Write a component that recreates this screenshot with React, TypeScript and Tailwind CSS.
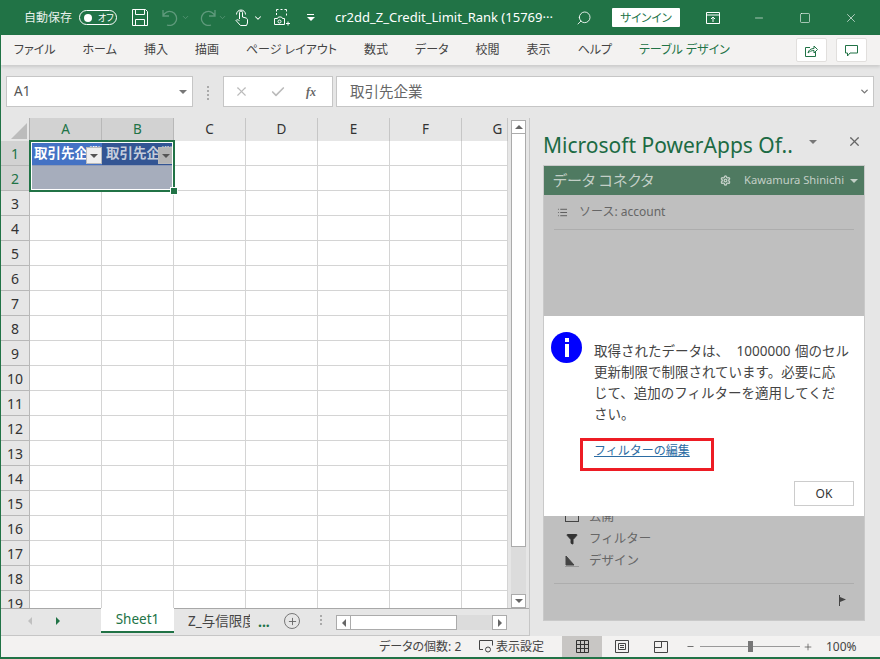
import { ChevronDown, Search, Minus, Square, X, Check, Plus, Settings, List, Filter } from 'lucide-react';

const font = { fontFamily: '"Noto Sans", "Noto Sans CJK JP", sans-serif' };
const cols = ['A', 'B', 'C', 'D', 'E', 'F', 'G'];
const rows = Array.from({ length: 19 }, (_, i) => i + 1);
const tabs = ['ファイル', 'ホーム', '挿入', '描画', 'ページ レイアウト', '数式', 'データ', '校閲', '表示', 'ヘルプ'];

function Caret({ className }: { className: string }) {
    return <span className={`w-0 h-0 border-x-[4px] border-x-transparent border-t-[4px] ${className}`} />;
}

function TitleBar() {
    return (
        <div className="h-[35px] shrink-0 bg-[#217346] text-white flex items-center text-[12px] pl-[23px] [font-feature-settings:'palt']">
            <span className="w-[55px] text-[#e8f0eb]">自動保存</span>
            <div className="w-[38px] h-[15px] rounded-full border border-white flex items-center pl-[4px] gap-[6px]">
                <span className="w-[8px] h-[8px] rounded-full bg-white" />
                <span className="text-[9px] leading-none">オフ</span>
            </div>
            <svg width="16" height="17" viewBox="0 0 16 17" fill="none" stroke="white" className="ml-[15px]">
                <path d="M.5.5h13l2 2v14H.5z M3.5.5v5h9v-5 M3.5 16.5v-6h9v6" />
            </svg>
            <svg width="16" height="17" viewBox="0 0 16 17" fill="none" stroke="#5f9a7c" strokeWidth="1.300" className="ml-[14px]">
                <path d="M1 1v6h6 M1 7a7 7 0 1 1 4 9" />
            </svg>
            <ChevronDown size={9} className="ml-[3px] text-[#5f9a7c]" />
            <svg width="16" height="17" viewBox="0 0 16 17" fill="none" stroke="#5f9a7c" strokeWidth="1.300" className="ml-[10px]">
                <path d="M15 1v6H9 M15 7a7 7 0 1 0-4 9" />
            </svg>
            <ChevronDown size={9} className="ml-[2px] text-[#5f9a7c]" />
            <svg width="13" height="17" viewBox="0 0 13 17" fill="none" stroke="white" className="ml-[8px]">
                <path d="M4.500 10V3.500a1.500 1.500 0 0 1 3 0V8l3.500 1c1 .4 1.500 1 1.500 2v3l-1 2.500H5.500L1 11.500c.5-1 1.700-1 3.500.2 M1.500 5.500a4.500 4.500 0 0 1 9 0" />
            </svg>
            <ChevronDown size={10} strokeWidth={2.500} className="ml-[5px]" />
            <svg width="16" height="17" viewBox="0 0 16 17" fill="none" stroke="white" className="ml-[11px]">
                <path d="M2.500 6V4 M2.500 2.500V.5h2 M6.500.5h2 M10.500.5h2v2 M12.500 4.500v2" />
                <path d="M.5 9.500h3l1-1.500h3l1 1.500h2v6h-10z" />
                <circle cx="5.500" cy="12.500" r="1.500" />
                <path d="M12 14.500h4 M14 12.500v4" />
            </svg>
            <div className="ml-[16px] w-[9px] flex flex-col items-center gap-[2px]">
                <span className="w-[7px] h-px bg-white" />
                <Caret className="border-t-white" />
            </div>
            <span className="ml-[20px] w-[241px] text-[13px] whitespace-nowrap [font-feature-settings:normal]">cr2dd_Z_Credit_Limit_Rank (15769···</span>
            <Search size={16} strokeWidth={1.300} className="-scale-x-100" />
            <div className="ml-[20px] w-[68px] h-[19px] bg-white text-[#217346] text-[11.500px] flex items-center justify-center rounded-[1px]">サインイン</div>
            <svg width="14" height="12" viewBox="0 0 14 12" fill="none" stroke="white" className="ml-[26px]">
                <path d="M.5.500h13v11H.5z M.5 3h13 M7 10V5 M5 7l2-2 2 2" />
            </svg>
            <Minus size={12} strokeWidth={1.200} className="ml-[33px]" />
            <Square size={12} strokeWidth={1.200} className="ml-[34px]" />
            <X size={14} strokeWidth={1.100} className="ml-[33px]" />
        </div>
    );
}

function RibbonTabs() {
    return (
        <div className="h-[30px] shrink-0 bg-[#f3f2f1] flex items-center pl-[13px] text-[12px] text-[#444] shadow-[0_2px_3px_rgba(0,0,0,0.12)] relative [font-feature-settings:'palt']">
            <div className="flex items-center gap-[27px] whitespace-nowrap">
                {tabs.map((t) => <span key={t}>{t}</span>)}
                <span className="text-[#217346]">テーブル デザイン</span>
            </div>
            <div className="ml-auto mr-[13px] flex gap-[9px]">
                <div className="w-[31px] h-[24px] bg-white border border-[#e1dfdd] rounded-[2px] flex items-center justify-center">
                    <svg width="13" height="13" viewBox="0 0 13 13" fill="none" stroke="#217346">
                        <path d="M5 3.500H.5v9h10V8 M3 9c.5-3 3-4.500 6-4.500V2l3.500 3.500L9 9V6.500C6.500 6.500 4.500 7.500 3 9z" />
                    </svg>
                </div>
                <div className="w-[31px] h-[24px] bg-white border border-[#e1dfdd] rounded-[2px] flex items-center justify-center">
                    <svg width="13" height="13" viewBox="0 0 13 13" fill="none" stroke="#217346">
                        <path d="M.5 1.500h12v7.500H5l-2.500 3V9h-2z" />
                    </svg>
                </div>
            </div>
        </div>
    );
}

function FormulaBar() {
    return (
        <div className="h-[53px] shrink-0 bg-[#e6e6e6] flex items-start pt-[11px] pl-[5px] pr-[6px]">
            <div className="w-[187px] h-[31px] bg-white border border-[#c6c6c6] flex items-center justify-between pl-[7px] pr-[5px] text-[#555] text-[13.500px]">
                <span>A1</span>
                <Caret className="border-t-[#777]" />
            </div>
            <div className="w-[30px] flex flex-col items-center gap-[2px] pt-[10px]">
                <span className="w-[2px] h-[2px] bg-[#aaa]" />
                <span className="w-[2px] h-[2px] bg-[#aaa]" />
                <span className="w-[2px] h-[2px] bg-[#aaa]" />
                <span className="w-[2px] h-[2px] bg-[#aaa]" />
            </div>
            <div className="w-[110px] h-[31px] bg-white border border-[#c6c6c6] flex items-center pl-[10px] text-[#bbb]">
                <X size={15} strokeWidth={1.800} />
                <Check size={16} strokeWidth={2.500} className="ml-[21px]" />
                <span className="ml-[20px] text-[#666] text-[12px] italic font-bold" style={{ fontFamily: '"Liberation Serif", serif' }}>fx</span>
            </div>
            <div className="ml-[3px] flex-1 h-[31px] bg-white border border-[#c6c6c6] flex items-center justify-between pl-[13px] pr-[3px] text-[#666] text-[14.500px]">
                <span>取引先企業</span>
                <ChevronDown size={11} strokeWidth={3} className="text-[#777]" />
            </div>
        </div>
    );
}

function FilterButton({ dark }: { dark?: boolean }) {
    return (
        <div className={`absolute right-0 top-[6px] w-[16px] h-[17px] border border-[#bbb] flex items-center justify-center ${dark ? 'bg-[#b4b4b4]' : 'bg-[#efefef]'}`}>
            <Caret className="border-t-[#555]" />
        </div>
    );
}

function Cell({ row, col }: { row: number; col: string }) {
    if (row === 1 && (col === 'A' || col === 'B')) {
        const dark = col === 'B';
        return (
            <div className={`w-[72px] h-[25px] shrink-0 relative overflow-hidden border-b border-[#8e9ab5] flex items-center pl-[4px] font-bold text-[13.500px] whitespace-nowrap ${dark ? 'bg-[#335593] text-[#c5cddc]' : 'bg-[#4472c4] text-white'}`}>
                取引先企業
                <FilterButton dark={dark} />
            </div>
        );
    }
    if (row === 2 && (col === 'A' || col === 'B')) {
        return <div className="w-[72px] h-[25px] shrink-0 bg-[#a6adbc]" />;
    }
    return <div className={`h-[25px] shrink-0 border-r border-b border-[#d4d4d4] bg-white ${col === 'G' ? 'w-[46px]' : 'w-[72px]'}`} />;
}

function Sheet() {
    return (
        <div className="flex-1 relative overflow-hidden">
            <div className="flex h-[23px]">
                <div className="w-[29px] shrink-0 bg-[#e6e6e6] border-r border-[#b0b0b0] flex items-end justify-end p-[2px]">
                    <span className="w-0 h-0 border-l-[16px] border-l-transparent border-b-[16px] border-b-[#bcbcbc]" />
                </div>
                {cols.map((c) => (
                    <div key={c} className={`shrink-0 flex items-center justify-center text-[13.500px] border-r ${c === 'A' || c === 'B' ? 'bg-[#d2d2d2] text-[#217346] border-[#b8b8b8]' : 'bg-[#e6e6e6] text-[#333] border-[#c6c6c6]'} ${c === 'G' ? 'w-[46px] pl-[26px]' : 'w-[72px]'}`}>{c}</div>
                ))}
            </div>
            {rows.map((r) => (
                <div key={r} className="flex">
                    <div className={`w-[29px] h-[25px] shrink-0 flex items-center justify-center text-[14px] border-r border-b border-[#b8b8b8] ${r < 3 ? 'bg-[#d2d2d2] text-[#217346]' : 'bg-[#e6e6e6] text-[#333]'}`}>{r}</div>
                    {cols.map((c) => <Cell key={c} row={r} col={c} />)}
                </div>
            ))}
            {/* selection frame */}
            <div className="absolute left-[28px] top-[22px] w-[146px] h-[52px] border-2 border-[#217346] shadow-[inset_0_0_0_1px_white] pointer-events-none" />
            <div className="absolute left-[170px] top-[70px] w-[6px] h-[6px] bg-[#217346] outline outline-white" />
        </div>
    );
}

function VScroll() {
    return (
        <div className="w-[15px] mx-[3px] flex flex-col pt-[2px] bg-[#e6e6e6]">
            <div className="h-[14px] bg-white border border-[#ababab] flex items-center justify-center">
                <span className="w-0 h-0 border-x-[4px] border-x-transparent border-b-[4px] border-b-[#666]" />
            </div>
            <div className="h-[413px] bg-white border-x border-b border-[#ababab]" />
            <div className="flex-1 bg-[#dcdcdc]" />
            <div className="h-[14px] bg-white border border-[#ababab] flex items-center justify-center">
                <Caret className="border-t-[#666]" />
            </div>
        </div>
    );
}

function TabsBar() {
    return (
        <div className="h-[28px] shrink-0 flex items-start bg-[#e6e6e6] border-b border-[#c6c6c6] text-[14px] border-t border-t-[#a8a8a8]">
            <div className="w-[100px] h-[24px] flex items-center pl-[27px] gap-[24px]">
                <span className="w-0 h-0 border-y-[4px] border-y-transparent border-r-[4px] border-r-[#c0c0c0]" />
                <span className="w-0 h-0 border-y-[4px] border-y-transparent border-l-[4px] border-l-[#217346]" />
            </div>
            <div className="w-[73px] h-[25px] -mt-px bg-white border-b-2 border-[#217346] text-[#217346] flex items-center justify-center text-[13.500px]">Sheet1</div>
            <div className="ml-[14px] w-[62px] h-[24px] overflow-hidden whitespace-nowrap flex items-center text-[#444] text-[13.500px]">Z_与信限度</div>
            <span className="ml-[8px] w-[12px] h-[24px] flex items-center text-[#217346] font-bold">...</span>
            <div className="ml-[14px] mt-[4px] w-[16px] h-[16px] rounded-full border border-[#777] flex items-center justify-center">
                <Plus size={11} strokeWidth={2} className="text-[#666]" />
            </div>
            <div className="ml-[20px] mt-[6px] flex flex-col gap-[2px]">
                <span className="w-[2px] h-[2px] bg-[#aaa]" />
                <span className="w-[2px] h-[2px] bg-[#aaa]" />
                <span className="w-[2px] h-[2px] bg-[#aaa]" />
            </div>
            <div className="ml-[14px] mt-[6px] w-[171px] h-[15px] flex">
                <div className="w-[15px] bg-white border border-[#ababab] flex items-center justify-center">
                    <span className="w-0 h-0 border-y-[4px] border-y-transparent border-r-[4px] border-r-[#666]" />
                </div>
                <div className="w-[106px] bg-white border-y border-r border-[#ababab]" />
                <div className="flex-1 bg-[#dcdcdc]" />
                <div className="w-[15px] bg-white border border-[#ababab] flex items-center justify-center">
                    <span className="w-0 h-0 border-y-[4px] border-y-transparent border-l-[4px] border-l-[#666]" />
                </div>
            </div>
        </div>
    );
}

function Dialog() {
    return (
        <div className="absolute left-0 right-0 top-[150px] h-[200px] bg-white z-10 text-[13.500px]">
            <div className="flex pl-[7px] pt-[16px]">
                <div className="w-[31px] h-[31px] shrink-0 rounded-full bg-[#0000ff] text-white flex flex-col items-center justify-center gap-[2px]">
                    <span className="w-[4px] h-[4px] bg-white" />
                    <span className="w-[4px] h-[13px] bg-white" />
                </div>
                <p className="ml-[12px] pt-[9px] text-[#444] leading-[21px] whitespace-nowrap">
                    取得されたデータは、 <span className="ml-[4px] mr-[1px]">1000000</span> 個のセル<br />
                    更新制限で制限されています。必要に応<br />
                    じて、追加のフィルターを適用してくだ<br />
                    さい。
                </p>
            </div>
            <div className="ml-[36px] mt-[13px] w-[134px] h-[33px] border-[3px] border-[#ed1c24] pl-[11px] pt-[1px] leading-[18px] text-[12px] text-[#2b6ca3] underline">フィルターの編集</div>
            <div className="absolute right-[10px] bottom-[10px] w-[60px] h-[25px] border border-[#ccc] flex items-center justify-center text-[12px] text-[#333]">OK</div>
        </div>
    );
}

function Pane() {
    return (
        <div className="flex-1 border-l border-[#c6c6c6] pl-[13px] pr-[15px] flex flex-col bg-[#e6e6e6]">
            <div className="h-[47px] shrink-0 flex items-center pt-[8px] text-[21px] text-[#1c6b44] whitespace-nowrap">
                <span className="w-[266px]">Microsoft PowerApps Of..</span>
                <Caret className="border-t-[#777] -mt-[8px]" />
                <X size={15} strokeWidth={2} className="ml-[30px] -mt-[8px] text-[#666]" />
            </div>
            <div className="flex-1 mb-[15px] relative bg-[#bfbfbf] border border-[#c9c9c9] flex flex-col">
                <div className="h-[29px] shrink-0 bg-[#4f7a61] flex items-center pl-[9px] text-[#c3cfc7]">
                    <span className="text-[15px] w-[167px] [font-feature-settings:'palt']">データ コネクタ</span>
                    <Settings size={11} strokeWidth={3} />
                    <span className="ml-[13px] w-[101px] text-[11.200px] whitespace-nowrap">Kawamura Shinichi</span>
                    <Caret className="border-t-[#c3cfc7] ml-[5px]" />
                </div>
                <div className="mx-[10px] h-[35px] shrink-0 border-b border-[#adadad] flex items-center text-[12px] text-[#666] pl-[3px]">
                    <List size={11} className="text-[#555]" />
                    <span className="ml-[11px]">ソース: account</span>
                </div>
                <div className="mt-[276px] pl-[21px] flex flex-col text-[12.500px] text-[#666]">
                    <div className="h-[22px] flex items-center">
                        <span className="w-[14px] h-[9px] border border-[#444]" />
                        <span className="ml-[10px]">公開</span>
                    </div>
                    <div className="h-[22px] flex items-center">
                        <span className="w-[14px] flex justify-center">
                            <Filter size={12} className="text-[#333] fill-[#333]" />
                        </span>
                        <span className="ml-[10px]">フィルター</span>
                    </div>
                    <div className="h-[22px] flex items-center">
                        <svg width="14" height="12" viewBox="0 0 14 12" fill="none" stroke="#444" className="shrink-0">
                            <path d="M1 1v9h8z" fill="#444" />
                            <path d="M0 11.500h14" stroke="#999" />
                        </svg>
                        <span className="ml-[10px]">デザイン</span>
                    </div>
                </div>
                <div className="mx-[10px] mt-[11px] border-t border-[#adadad]" />
                <div className="mt-[11px] pr-[17px] flex justify-end">
                    <svg width="8" height="11" viewBox="0 0 8 11" fill="#444">
                        <path d="M0 0h1v11H0z M1 2l6 2.500-6 2.500z" />
                    </svg>
                </div>
                <Dialog />
            </div>
        </div>
    );
}

function StatusBar() {
    return (
        <div className="h-[21px] shrink-0 bg-[#f3f2f1] flex items-center text-[12px] text-[#444] pl-[378px] whitespace-nowrap">
            <span className="w-[100px] [font-feature-settings:'palt']">データの個数: 2</span>
            <svg width="14" height="13" viewBox="0 0 14 13" fill="none" stroke="#444">
                <path d="M4 9.500H.5v-9h13v5" />
                <circle cx="9" cy="9.500" r="2.500" />
            </svg>
            <span className="ml-[3px] w-[66px]">表示設定</span>
            <div className="w-[40px] h-[21px] bg-[#c8c6c4] flex items-center justify-center">
                <svg width="13" height="13" viewBox="0 0 13 13" fill="none" stroke="#333">
                    <path d="M.5.500h12v12H.5z M4.500.500v12 M8.500.500v12 M.5 4.500h12 M.5 8.500h12" />
                </svg>
            </div>
            <svg width="14" height="13" viewBox="0 0 14 13" fill="none" stroke="#444" className="ml-[13px]">
                <path d="M.5.500h13v12H.5z M3.500 3.500h7v6h-7z M5 5.500h4 M5 7.500h4" />
            </svg>
            <svg width="14" height="12" viewBox="0 0 14 12" fill="none" stroke="#444" className="ml-[25px]">
                <path d="M.5.500h13v11H.5z M.5 6.500h7v-6" />
            </svg>
            <Minus size={9} strokeWidth={2} className="ml-[18px] text-[#444]" />
            <div className="ml-[5px] w-[100px] h-px bg-[#999] flex items-center pl-[48px]">
                <span className="w-[5px] h-[11px] bg-[#777] shrink-0" />
            </div>
            <Plus size={10} strokeWidth={1.600} className="ml-[3px] text-[#444]" />
            <span className="ml-[13px]">100%</span>
        </div>
    );
}

export default function App() {
    return (
        <div className="w-[880px] h-[659px] overflow-hidden flex flex-col bg-[#e6e6e6] border-l border-b-2 border-[#217346]" style={font}>
            <TitleBar />
            <RibbonTabs />
            <FormulaBar />
            <div className="h-[518px] shrink-0 flex">
                <div className="w-[528px] shrink-0 flex flex-col">
                    <div className="h-[490px] shrink-0 flex">
                        <Sheet />
                        <VScroll />
                    </div>
                    <TabsBar />
                </div>
                <Pane />
            </div>
            <StatusBar />
        </div>
    );
}
